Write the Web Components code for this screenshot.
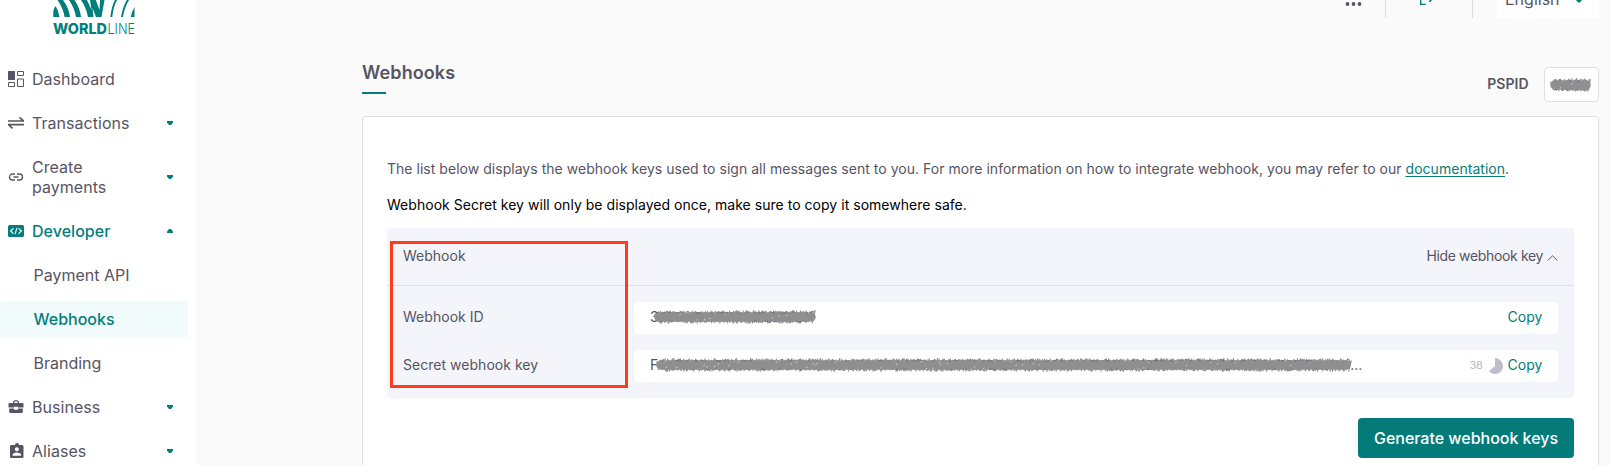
<!DOCTYPE html>
<html lang="en"><head><meta charset="utf-8"><title>Webhooks</title>
<style>
html,body{margin:0;height:100%;overflow:hidden}
body{font-family:Inter,"Liberation Sans",sans-serif;color:#575463;background:#fafafa;font-size:16px}
</style></head><body>
<wl-app></wl-app>
<script>
const define=(name,html,setup)=>customElements.define(name,class extends HTMLElement{
  connectedCallback(){
    if(this.shadowRoot)return;
    const t=document.createElement('template');
    t.innerHTML=html;
    const c=t.content.cloneNode(true);
    if(setup)setup(this,c);
    this.attachShadow({mode:'open'}).append(c);
  }
});
const ICONS={
 dashboard:'<path d="M0 0h7v9H0z" fill="currentColor"/><path d="M9.5.5h6v4h-6zM9.5 8h6v7.5h-6zM.5 11.5h6v4h-6z" fill="none" stroke="currentColor"/>',
 transfer:'<path d="M0 6h15.5L11.6 2.3M16 9.7H.6L4.400 13.300" fill="none" stroke="currentColor" stroke-width="1.700"/>',
 link:'<path d="M7 5H4.500a3 3 0 0 0 0 6H7M9 5h2.500a3 3 0 0 1 0 6H9M5.500 8h5" fill="none" stroke="currentColor" stroke-width="1.300"/>',
 code:'<rect y="2" width="16" height="12" rx="1.500" fill="currentColor"/><path d="M5.400 5.300 2.600 8l2.800 2.700M10.600 5.300 13.400 8l-2.800 2.700M9 4.800 7 11.200" fill="none" stroke="#fff" stroke-width="1.100"/>',
 business:'<path d="M5 4V2.500L6.300 1.200h3.400L11 2.500V4h3.500a1 1 0 0 1 1 1v3.500H10V7.700H6v.8H.500V5a1 1 0 0 1 1-1zM6.300 4h3.400V2.600H6.300zM1.200 9.500H6v1.300h4V9.500h4.800V13a1 1 0 0 1-1 1H2.200a1 1 0 0 1-1-1z" fill="currentColor" fill-rule="evenodd"/>',
 badge:'<path d="M3.500 2H7a2 2 0 0 1 4 0h3q1.500 0 1.500 1.500v10.200q0 1.300-1.500 1.300H3.500Q2 15 2 13.700V3.500Q2 2 3.500 2zM8.800 4.300a2 2 0 1 0 .1 0zM4.500 12.700h8.600v-1.200q-1-2-4.300-2t-4.300 2z" fill="currentColor" fill-rule="evenodd"/>'
};
define('wl-icon',`<style>:host{display:block;width:16px;height:16px;flex:none}svg{display:block}</style><svg width="16" height="16" viewBox="0 0 16 16"></svg>`,
 (h,r)=>{r.querySelector('svg').innerHTML=ICONS[h.getAttribute('name')]});

define('wl-logo',`<style>:host{display:block;width:83px;height:40px}svg{display:block;overflow:visible}text{font-family:Inter,sans-serif;fill:#047e7a}</style>
<svg width="83" height="40" viewBox="0 0 83 40">
<g fill="#047e7a"><path d="M.3 17V12Q.8 8 2.500 6 5.800 11 6.500 17zM4.500 0H10Q16 8 17 17H11.600Q10.500 9 4.500 0zM16 0H21.500Q27 8 28 17H23Q21.500 8 16 0zM28 0H34L38.500 10 37 0H42.800L46.500 10 47 0H51.500L48.500 17H43L39.500 8 40.500 17H35Q33 7 28 0z"/></g>
<g fill="none" stroke="#047e7a" stroke-width="1.900"><path d="M63.500-1Q59.500 6 58.300 17M75.500-1Q70.500 7 69 17"/></g><path d="M81.500 7V17H77.800Q79 11 81.500 7z" fill="#047e7a"/>
<text x="0" y="34.300" font-size="15" font-weight="800" textLength="54" lengthAdjust="spacingAndGlyphs">WORLD</text><text x="54.500" y="34.300" font-size="15" font-weight="300" textLength="27.500" lengthAdjust="spacingAndGlyphs">LINE</text></svg>`);

define('wl-nav-item',`<style>
:host{display:block}
.row{display:grid;grid-template-columns:16px 116px 1fr;column-gap:8px;align-items:center;padding:12px 23px 12px 8px;line-height:20px}
:host([active]) .row{color:#047e7a;font-weight:500}
.label{letter-spacing:.04px}
.arrow{justify-self:end;display:block;color:#047e7a}
:host([active]) .arrow{transform:rotate(180deg)}
:host(:not([menu])) .arrow{display:none}
</style><div class="row"><wl-icon></wl-icon><span class="label"><slot></slot></span><svg class="arrow" width="6" height="4" viewBox="0 0 6 4"><path d="M0 0h6v1.500L4 4H2L0 1.500z" fill="currentColor"/></svg></div>`,
 (h,r)=>r.querySelector('wl-icon').setAttribute('name',h.getAttribute('icon')));

define('wl-sub-item',`<style>
:host{display:block;margin:4px 8px 4px 0;padding:8px 0 8px 33.500px;line-height:20px;border-radius:4px}
:host([active]){background:#f2fbfc;color:#047e7a;font-weight:500}
</style><div><slot></slot></div>`);

define('wl-sidebar',`<style>
:host{display:block;width:196px;height:465px;background:#fff;overflow:hidden;flex:none}
.brand{padding-left:53px;height:57px;box-sizing:border-box}
nav{display:flex;flex-direction:column}
</style><div class="brand"><wl-logo></wl-logo></div>
<nav><wl-nav-item icon="dashboard">Dashboard</wl-nav-item>
<wl-nav-item icon="transfer" menu>Transactions</wl-nav-item>
<wl-nav-item icon="link" menu>Create<br>payments</wl-nav-item>
<wl-nav-item icon="code" menu active>Developer</wl-nav-item>
<wl-sub-item>Payment API</wl-sub-item><wl-sub-item active>Webhooks</wl-sub-item><wl-sub-item>Branding</wl-sub-item>
<wl-nav-item icon="business" menu>Business</wl-nav-item>
<wl-nav-item icon="badge" menu>Aliases</wl-nav-item></nav>`);

define('wl-topbar',`<style>
:host{display:flex;justify-content:flex-end;align-items:flex-start;height:19px}
.dots{width:17px;margin:2px 23px 0 0}
.sep{width:1px;height:18px;background:#dcdde1}
.exit{margin:0 20px 0 34px;width:32px}
.lang{display:flex;width:102px;height:19px;background:#fff;border-radius:0 0 4px 4px;margin-left:24px}
.lang span{line-height:20px;margin:-11px 18px 0 8px;width:53px;white-space:nowrap}
svg{display:block}
</style>
<svg class="dots" width="17" height="4"><g fill="#575463"><circle cx="2.500" cy="2" r="1.900"/><circle cx="8.500" cy="2" r="1.900"/><circle cx="14.500" cy="2" r="1.900"/></g></svg>
<i class="sep"></i>
<svg class="exit" width="32" height="8"><path d="M.7 0V4.400H5.800M9 1.200h1.200L11.500-.5" fill="none" stroke="#047e7a" stroke-width="1.400"/></svg>
<i class="sep"></i>
<div class="lang"><span>English</span><svg width="6" height="4"><path d="M0 0h6L4 2.500H2z" fill="#047e7a"/></svg></div>`);

define('wl-scribble',`<style>:host{display:block;height:16px}svg{display:block}</style><svg height="16"></svg>`,(h,r)=>{
  const w=+h.getAttribute('width');h.style.width=w+'px';
  const s=r.querySelector('svg');s.setAttribute('width',w);
  let n=+h.getAttribute('seed')||7;const rnd=()=>(n=(n*16807)%2147483647)/2147483647;
  for(let i=0;i<5;i++)rnd();
  let d='M1 6L5 4',e='',f='';
  for(let x=3;x<w-3;x+=1.3){
   d+=`L${(x+rnd()*3).toFixed(1)} ${(1.200+rnd()*2.600).toFixed(1)}L${(x-rnd()*3+1).toFixed(1)} ${(12.200+rnd()*2.500).toFixed(1)}`;
   if(rnd()<.45){const top=rnd()<.7;e+=`M${x.toFixed(1)} ${((top?2.500:12)+rnd()*1.500).toFixed(1)}h${(1+rnd()*1.500).toFixed(1)}v.8`;}
   if(rnd()<.1)f+=`M${x.toFixed(1)} ${(2.500+rnd()*10.500).toFixed(1)}l1.300-.6`;
  }
  s.innerHTML=`<path d="${d}" fill="none" stroke="#929292" stroke-width="1.100"/><path d="M6 8H${w-6}" stroke="#8f8f8f" stroke-width="9.500" stroke-linecap="round"/><path d="${e}" fill="none" stroke="#625f6d" stroke-width=".8" opacity=".7"/><path d="${f}" fill="none" stroke="#ddd" stroke-width=".9"/>`;
});

define('wl-heading',`<style>
:host{display:flex;justify-content:space-between;height:97px}
.title{padding-top:42px}
h1{margin:0;font-size:18px;line-height:24px;font-weight:600;letter-spacing:.1px}
.bar{width:24px;height:2px;background:#047e7a;margin-top:7px}
.psp{display:flex;align-items:center;gap:15.500px;height:35px;padding-top:48px;font-size:14px;font-weight:600}
.psp span{padding-bottom:2px}
.box{width:55px;height:35px;box-sizing:border-box;border:1px solid #dfe0e5;border-radius:4px;background:#fff;display:flex;align-items:center;padding-left:4px}
</style><div class="title"><h1>Webhooks</h1><div class="bar"></div></div>
<div class="psp"><span>PSPID</span><div class="box"><wl-scribble width="43" seed="31"></wl-scribble></div></div>`);

define('wl-field',`<style>
:host{display:grid;grid-template-columns:231px 1fr;align-items:center;height:32px;font-size:14px;line-height:20px}
.value{background:#fff;height:32px;box-sizing:border-box;border-radius:4px;display:flex;align-items:center;padding:0 15.500px 2px 16px;min-width:0}
.txt{display:flex;align-items:center;flex:1}
.copy{color:#047e7a}
.label{padding-bottom:2px}
.label,.copy{letter-spacing:var(--track)}
</style><span class="label"></span><div class="value"><div class="txt"><slot></slot></div><slot name="extra"></slot><span class="copy">Copy</span></div>`,
 (h,r)=>r.querySelector('.label').textContent=h.getAttribute('label'));

define('wl-panel',`<style>
:host{display:block;position:relative;height:170px;background:#f4f5fa;border-radius:4px;font-size:14px}
.head{display:flex;justify-content:space-between;height:58px;box-sizing:border-box;border-bottom:1px solid #dfe0e5;padding:18px 16px 0;line-height:20px}
.toggle{display:flex;gap:4px;letter-spacing:-.35px}
.toggle svg{margin-top:9px}
.body{display:flex;flex-direction:column;gap:16px;padding:16px 16px 0}
.extra{display:flex;align-items:center;gap:6px;color:#b9b7c2;font-size:11px;letter-spacing:-.3px;margin-right:5px}
.extra svg{margin-top:2px}
.mark{position:absolute;left:3px;top:13px;width:238px;height:147px;box-sizing:border-box;border:3px solid #fe3b1f}
.a{margin-left:-6px}.b{margin:0 -2px 0 -3px}
</style>
<div class="head"><span>Webhook</span><span class="toggle">Hide webhook key<svg width="11" height="6"><path d="M.7 5.500 5.500.8l4.800 4.700" fill="none" stroke="#575463"/></svg></span></div>
<div class="body"><wl-field label="Webhook ID"><span>3</span><wl-scribble class="a" width="164" seed="9"></wl-scribble></wl-field>
<wl-field label="Secret webhook key"><span>F</span><wl-scribble class="b" width="697" seed="77"></wl-scribble><span>...</span>
<span slot="extra" class="extra">38<svg width="14" height="16" viewBox="0 0 14 16"><path d="M6 8V0a8 8 0 1 1-6 13.300z" fill="#bfbdc9"/></svg></span></wl-field></div>
<div class="mark"></div>`);

define('wl-card',`<style>
:host{display:block;box-sizing:border-box;height:370px;border:1px solid #dfe0e1;border-radius:4px;background:#fff;padding:42px 24px 0;font-size:14px}
p{margin:0 0 16px;line-height:20px;white-space:nowrap;letter-spacing:var(--track)}
p+p{color:#000;margin-bottom:13px}
a{color:#047e7a;text-decoration:underline;text-underline-offset:2px}
button{display:block;margin:20px 0 0 auto;width:216px;height:40px;border:0;border-radius:4px;background:#047b79;color:#fff;font:500 16px Inter,sans-serif;letter-spacing:-.02px;padding:0}
</style><p>The list below displays the webhook keys used to sign all messages sent to you. For more information on how to integrate webhook, you may refer to our <a>documentation</a>.</p>
<p>Webhook Secret key will only be displayed once, make sure to copy it somewhere safe.</p>
<wl-panel></wl-panel><button>Generate webhook keys</button>`);

define('wl-app',`<style>:host{display:flex;height:465px;overflow:hidden;--track:.029px}main{flex:1;padding:0 12px 0 166px;min-width:0}</style>
<wl-sidebar></wl-sidebar><main><wl-topbar></wl-topbar><wl-heading></wl-heading><wl-card></wl-card></main>`);
</script></body></html>
